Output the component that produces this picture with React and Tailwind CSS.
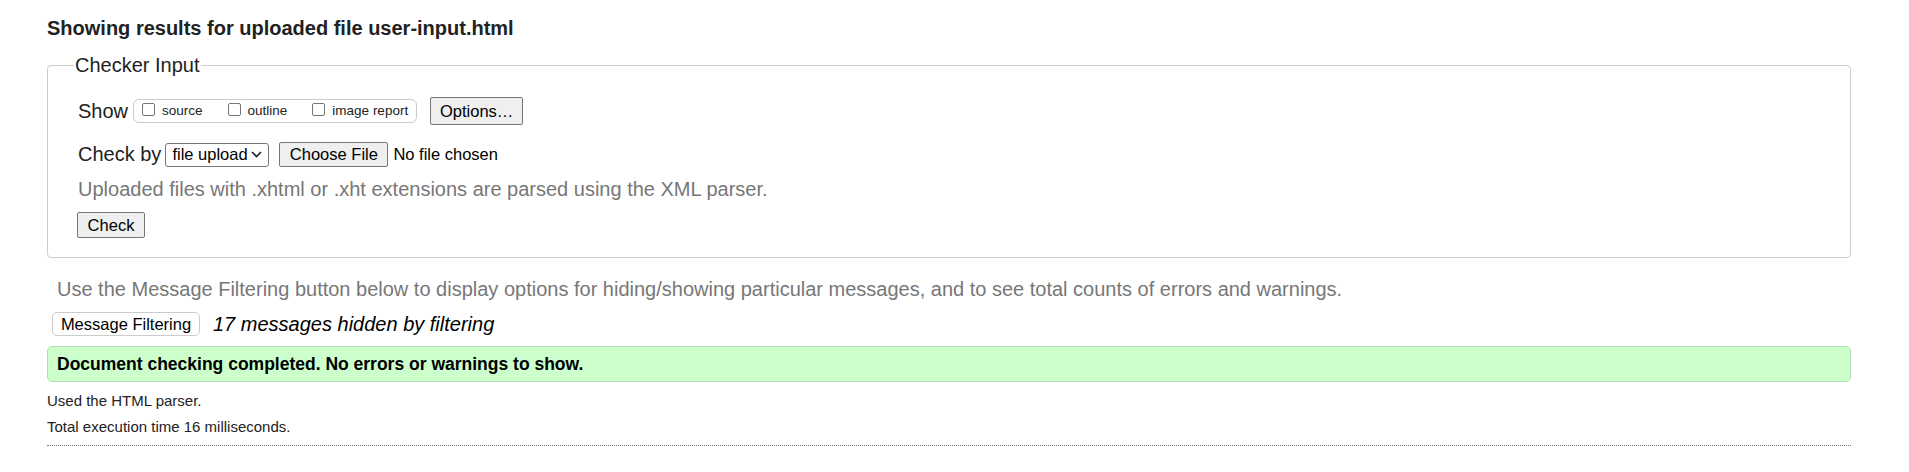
import React from 'react';

const Chevron = () => (
    <svg width="11" height="7" viewBox="0 0 11 7" fill="none">
        <polyline points="1,1 5.5,5.5 10,1" stroke="#222" strokeWidth="1.6" />
    </svg>
);

const Box = ({ label, first }) => (
    <label className={`flex items-center ${first ? '' : 'ml-[25px]'}`}>
        <input type="checkbox" className="appearance-none w-[13px] h-[13px] -mt-[3px] border border-[#767676] rounded-[2px] bg-white" />
        <span className="ml-[7px]">{label}</span>
    </label>
);

const grayBtn = 'border border-[#767676] rounded-[2px] bg-[#efefef] text-[16.5px] text-black flex items-center justify-center';

export default function App() {
    return (
        <div className="min-h-screen bg-white font-['Liberation_Sans',Arial,sans-serif] text-[#222] pl-[47px] pr-[58px] pt-[17px]">
            <h2 className="text-[20px] leading-[23px] font-bold">Showing results for uploaded file user-input.html</h2>

            <fieldset className="mt-[14px] border border-[#ccc] rounded-[4px] pl-[26px] pr-[26px] pb-[19px]">
                <legend className="px-[1px] text-[20px] leading-[23px]">Checker Input</legend>

                <div className="mt-[20px] ml-[4px] flex items-center h-[28px]">
                    <span className="text-[20px] leading-[23px]">Show</span>
                    <div className="ml-[5px] flex items-center h-[24px] border border-[#ccc] rounded-[6px] pl-[8px] pr-[8px] text-[13.5px] leading-[16px]">
                        <Box label="source" first />
                        <Box label="outline" />
                        <Box label="image report" />
                    </div>
                    <button className={`ml-[13px] h-[28px] w-[93px] ${grayBtn}`}>Options…</button>
                </div>

                <div className="mt-[17px] ml-[4px] flex items-center h-[25px]">
                    <span className="text-[20px] leading-[23px]">Check by</span>
                    <div className="ml-[4px] w-[104px] h-[24px] border border-[#767676] rounded-[3px] bg-white flex items-center justify-between pl-[6px] pr-[6px] text-[16.5px] text-black">
                        <span>file upload</span>
                        <Chevron />
                    </div>
                    <button className={`ml-[10px] h-[25px] w-[109px] ${grayBtn}`}>Choose File</button>
                    <span className="ml-[5px] text-[16.5px] text-black">No file chosen</span>
                </div>

                <p className="mt-[11px] ml-[4px] text-[20px] leading-[23px] text-[#777]">
                    Uploaded files with .xhtml or .xht extensions are parsed using the XML parser.
                </p>

                <button className={`mt-[11px] ml-[3px] h-[26px] w-[68px] ${grayBtn}`}>Check</button>
            </fieldset>

            <p className="mt-[20px] pl-[10px] text-[20px] leading-[23px] text-[#777]">
                Use the Message Filtering button below to display options for hiding/showing particular messages, and to see total counts of errors and warnings.
            </p>

            <div className="mt-[11px] flex items-center h-[24px]">
                <button className="ml-[5px] h-[24px] w-[148px] border border-[#ccc] rounded-[5px] bg-white text-[16.5px] text-black flex items-center justify-center">Message Filtering</button>
                <span className="ml-[13px] text-[20px] leading-[23px] italic text-black">17 messages hidden by filtering</span>
            </div>

            <div className="mt-[10px] h-[36px] border border-[#b5dcb5] rounded-[5px] bg-[#ccffcc] flex items-center pl-[9px]">
                <p className="text-[17.5px] leading-[20px] font-bold text-black">Document checking completed. No errors or warnings to show.</p>
            </div>

            <p className="mt-[10px] text-[15px] leading-[17px]">Used the HTML parser.</p>
            <p className="mt-[9px] text-[15px] leading-[17px]">Total execution time 16 milliseconds.</p>

            <div className="mt-[10px] border-t border-dotted border-[#777]" />
        </div>
    );
}
